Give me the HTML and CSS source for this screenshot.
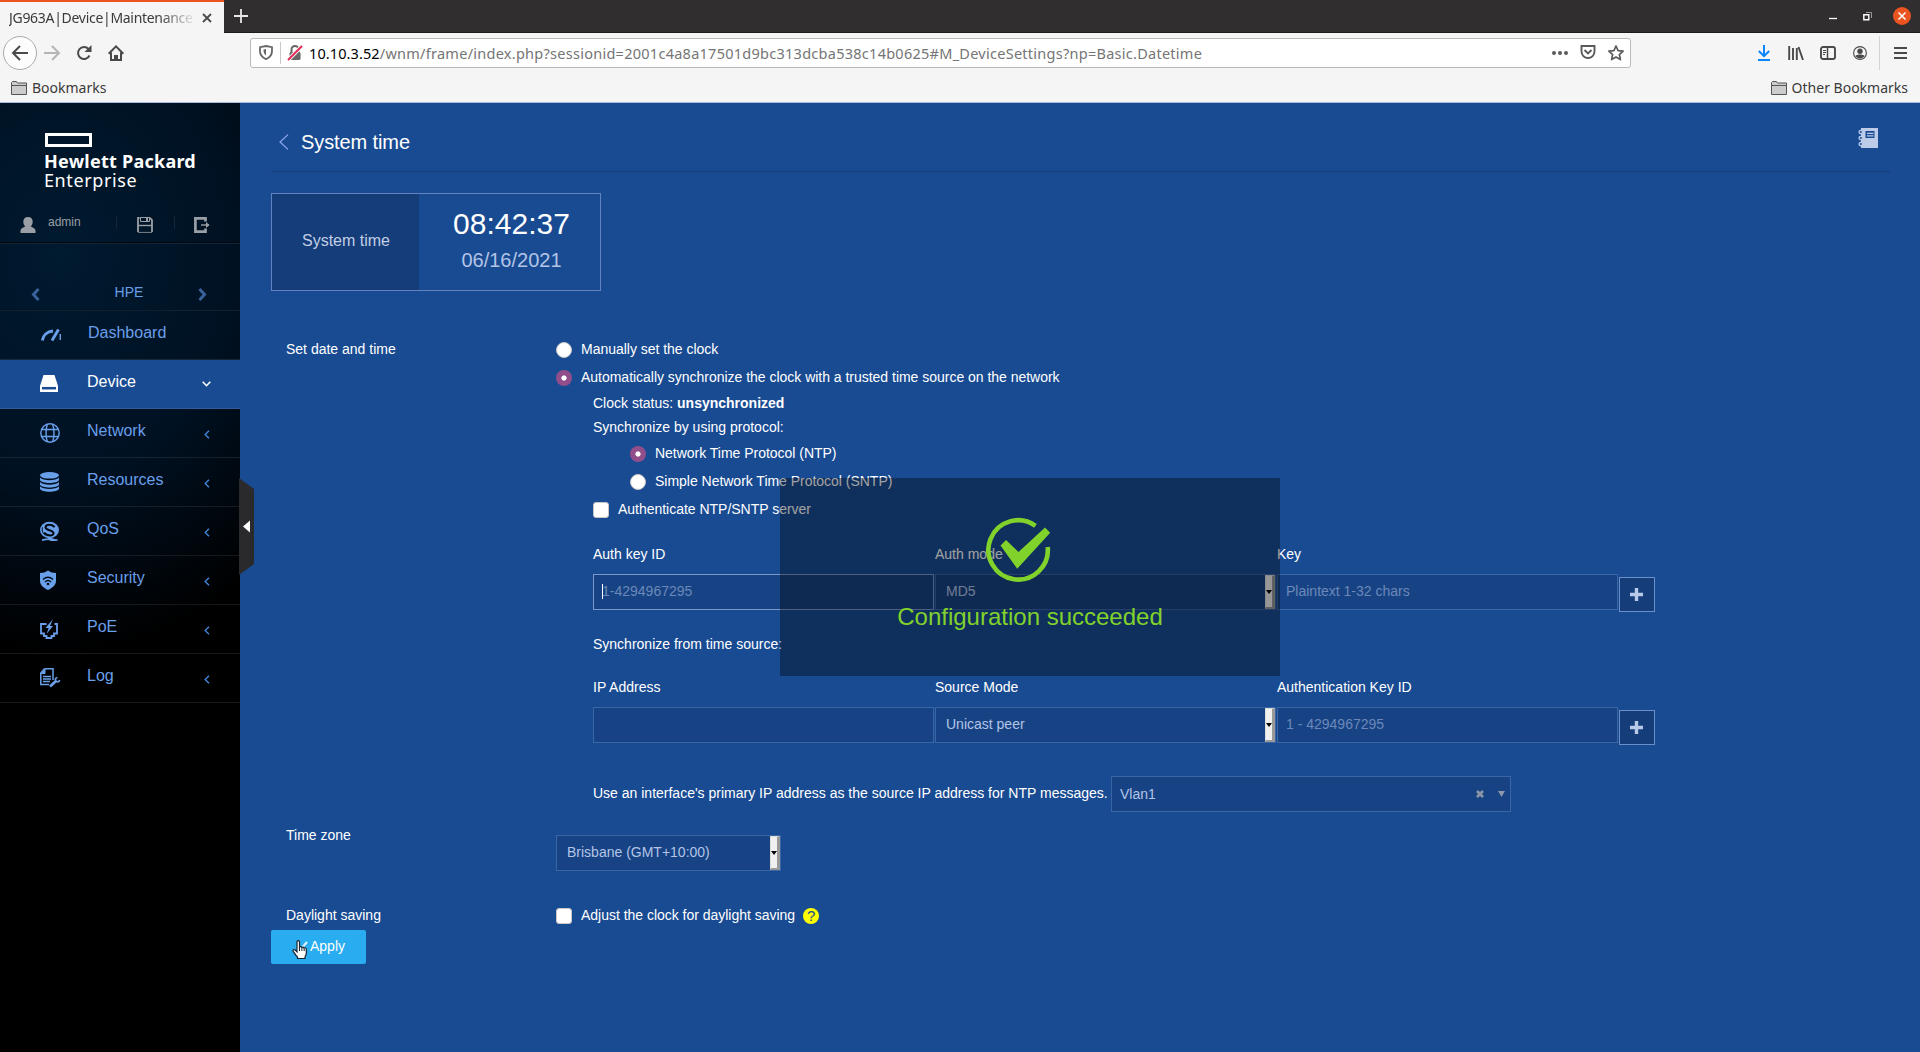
FILE: index.html
```html
<!DOCTYPE html>
<html lang="en">
<head>
<meta charset="utf-8">
<title>JG963A|Device|Maintenance</title>
<link rel="stylesheet" href="styles.css">
</head>
<body>
<div class="browser">
  <div class="tabstrip">
    <div class="tab"><span class="tab-title">JG963A|Device|Maintenance</span>
      <svg class="tab-close" width="10" height="10" viewBox="0 0 10 10"><path d="M1 1l8 8M9 1l-8 8" stroke="#4a4a4a" stroke-width="1.8"/></svg>
    </div>
    <svg class="tab-new" width="14" height="14" viewBox="0 0 14 14"><path d="M7 0v14M0 7h14" stroke="#e8e8e8" stroke-width="1.8"/></svg>
    <div class="window-buttons">
      <svg width="8" height="10" viewBox="0 0 8 10"><path d="M0 7.5h8" stroke="#fff" stroke-width="1.3"/></svg>
      <svg width="9" height="9" viewBox="0 0 9 9" fill="none"><path d="M.8 2.8h5v5h-5z" stroke="#fff" stroke-width="1.4"/><path d="M3 .5h5.5V6" stroke="#999"/></svg>
      <svg class="window-close" width="18" height="18" viewBox="0 0 18 18"><circle cx="9" cy="9" r="9" fill="#e95420"/><path d="M5.500 5.500l7 7M12.500 5.500l-7 7" stroke="#fff" stroke-width="1.5"/></svg>
    </div>
  </div>
  <div class="navbar">
    <div class="nav-buttons">
      <span class="back"><svg width="18" height="16" viewBox="0 0 18 16" fill="none" stroke="#4a4a4a" stroke-width="2"><path d="M17 8H2M9 1L2 8l7 7"/></svg></span>
      <svg width="17" height="16" viewBox="0 0 17 16" fill="none" stroke="#b5b5b5" stroke-width="2"><path d="M0 8h15M8 1l7 7-7 7"/></svg>
      <svg width="16" height="16" viewBox="0 0 16 16" fill="none" stroke="#4a4a4a" stroke-width="2"><path d="M13.500 10.500A6 6 0 1 1 12.500 4"/><path d="M15.500 0v7h-7z" fill="#4a4a4a" stroke="none"/></svg>
      <svg width="16" height="16" viewBox="0 0 16 16" fill="none" stroke="#4a4a4a" stroke-width="2"><path d="M.7 8.700L8 1.400l7.300 7.300M3 7.500V15h10V7.500"/><path d="M6 15v-5h4v5" fill="#4a4a4a" stroke="none"/></svg>
    </div>
    <div class="urlbar">
      <svg width="14" height="15" viewBox="0 0 14 15" fill="none" stroke="#666" stroke-width="1.8"><path d="M7 1L13 2.200V6c0 4.500-3 7-6 8.200C4 13 1 10.500 1 6V2.200z"/><path d="M7 4v6.500C5 9 4.500 7.500 4.500 4.500z" fill="#666" stroke="none"/></svg>
      <i class="url-divider"></i>
      <svg class="lock" width="16" height="16" viewBox="0 0 16 16" fill="none"><path d="M4.500 8V4.500a3.500 3.500 0 0 1 7 0V8" stroke="#666" stroke-width="2"/><rect x="2.500" y="7" width="11" height="8" rx="1.500" fill="#666"/><path d="M1 15L15 1" stroke="#f5f5f5" stroke-width="4"/><path d="M1 15L15 1" stroke="#e22850" stroke-width="1.800"/></svg>
      <span class="url"><b>10.10.3.52</b>/wnm/frame/index.php?sessionid=2001c4a8a17501d9bc313dcba538c14b0625#M_DeviceSettings?np=Basic.Datetime</span>
      <div class="url-actions">
        <svg width="16" height="4" viewBox="0 0 16 4" fill="#5a5a5a"><circle cx="2" cy="2" r="2"/><circle cx="8" cy="2" r="2"/><circle cx="14" cy="2" r="2"/></svg>
        <svg width="16" height="15" viewBox="0 0 16 15" fill="none" stroke="#5a5a5a" stroke-width="1.900"><path d="M1.500 1h13v5.500a6.500 6.500 0 0 1-13 0z"/><path d="M4.500 5L8 8.500 11.500 5"/></svg>
        <svg width="16" height="16" viewBox="0 0 16 16" fill="none" stroke="#5a5a5a" stroke-width="1.700" stroke-linejoin="round"><path d="M8 1l2.100 4.600 5 .6-3.700 3.400 1 5L8 12.100l-4.400 2.500 1-5L.9 6.200l5-.6z"/></svg>
      </div>
    </div>
    <div class="tools">
      <svg width="14" height="16" viewBox="0 0 14 16" fill="none" stroke="#0a84ff" stroke-width="2"><path d="M7 0v11M1.800 6L7 11.200 12.200 6M1 15h12"/></svg>
      <svg width="16" height="14" viewBox="0 0 16 14" stroke="#4a4a4a" stroke-width="1.900"><path d="M1.200 0v14M5 2v12M8.800 2v12M10.500 1l4.500 13"/></svg>
      <svg width="16" height="14" viewBox="0 0 16 14" fill="none" stroke="#4a4a4a"><rect x="1" y="1" width="14" height="12" rx="2" stroke-width="1.900"/><path d="M7.500 1v12" stroke-width="1.500"/><path d="M3 4.500h3M3 6.500h3M3 8.500h2"/></svg>
      <svg width="14" height="14" viewBox="0 0 14 14"><circle cx="7" cy="7" r="6.400" fill="none" stroke="#4a4a4a" stroke-width="1.100"/><circle cx="7" cy="5.200" r="2.700" fill="#4a4a4a"/><path d="M2.500 10c1-2 8-2 9 0-2 3.300-7 3.300-9 0z" fill="#4a4a4a"/></svg>
      <i class="tool-divider"></i>
      <svg width="13" height="12" viewBox="0 0 13 12" stroke="#4a4a4a" stroke-width="2"><path d="M0 1h13M0 6h13M0 11h13"/></svg>
    </div>
  </div>
  <div class="bookmarks">
    <span class="bookmark"><svg width="16" height="14" viewBox="0 0 16 14" fill="#ccc" stroke="#555"><path d="M.5 13.500V1.500l1-1h4l1 1.500h9v11.500z"/><path d="M.5 4.500h15"/></svg>Bookmarks</span>
    <span class="bookmark"><svg width="16" height="14" viewBox="0 0 16 14" fill="#ccc" stroke="#555"><path d="M.5 13.500V1.500l1-1h4l1 1.500h9v11.500z"/><path d="M.5 4.500h15"/></svg>Other Bookmarks</span>
  </div>
</div>

<div class="app">
  <aside class="sidebar">
    <div class="brand"><i class="brand-mark"></i><span class="brand-name">Hewlett Packard</span><span class="brand-sub">Enterprise</span></div>
    <div class="user">
      <svg width="16" height="16" viewBox="0 0 16 16" fill="#9a9fa5"><path d="M8 0c3 0 4.700 2 4.700 4.700 0 2-.8 3.500-2 4.500 2 1.300 4.500 2 4.800 4.300V16H.5v-2.500C.8 11.200 3.300 10.500 5.300 9.200c-1.200-1-2-2.500-2-4.500C3.300 2 5 0 8 0z"/></svg>
      <span class="user-name">admin</span><i></i>
      <svg width="16" height="16" viewBox="0 0 16 16" fill="none" stroke="#9a9fa5"><path d="M1 15V1h1.500M13 1l2 2v12" stroke-width="1.800"/><path d="M1 15.400h14" stroke-width=".8"/><path d="M1 8.500h14" stroke-width="1.400"/><path d="M3.500 0v4.500h9V0M4 .5h8" stroke-width="1"/><path d="M10 1v3" stroke-width="2"/></svg><i></i>
      <svg width="16" height="16" viewBox="0 0 16 16" fill="none" stroke="#9a9fa5"><path d="M11.500 4.500V1.400H1.400v13.200h10.100V11.500" stroke-width="2.700"/><path d="M7 8h8" stroke-width="1.400"/><path d="M12 5l3.500 3L12 11z" fill="#9a9fa5" stroke="none"/></svg>
    </div>
    <div class="context">
      <svg width="9" height="13" viewBox="0 0 9 13" fill="none" stroke="#39629c" stroke-width="3"><path d="M7.500 1L2.500 6.500l5 5.500"/></svg>
      <span>HPE</span>
      <svg width="9" height="13" viewBox="0 0 9 13" fill="none" stroke="#39629c" stroke-width="3"><path d="M1.500 1l5 5.500-5 5.500"/></svg>
    </div>
    <nav class="menu">
      <a class="item"><svg width="21" height="20" viewBox="0 0 21 20" fill="none" stroke="#6a9fea"><path d="M2.300 15.500C3 10.500 7 6.500 13 6" stroke-width="2.800"/><path d="M12 15.500L18.500 4.500" stroke-width="2.900"/><path d="M20.300 9v6" stroke-width="1.400"/></svg><span>Dashboard</span></a>
      <a class="item active"><svg width="20" height="20" viewBox="0 0 20 20"><path fill="#fff" d="M3.500 1h11L18 12v6H0v-6z"/><path stroke="#194b92" stroke-width="2.500" d="M2 14.200h14"/></svg><span>Device</span><svg class="caret" width="9" height="6" viewBox="0 0 9 6"><path d="M.7.7l3.800 4 3.800-4"/></svg></a>
      <a class="item"><svg width="20" height="20" viewBox="0 0 20 20" fill="none" stroke="#6a9fea" stroke-width="1.400"><circle cx="10" cy="10" r="9.200"/><path d="M7.500 1C5.500 6 5.500 14 7.500 19M12.500 1c2 5 2 13 0 18M1.500 6.500h17M1.500 13.500h17"/></svg><span>Network</span><svg class="caret" width="6" height="9" viewBox="0 0 6 9"><path d="M5 .7L1.200 4.500 5 8.300"/></svg></a>
      <a class="item"><svg width="20" height="20" viewBox="0 0 20 20" fill="#6a9fea"><ellipse cx="9.500" cy="3.300" rx="9.500" ry="3.300"/><path d="M0 5.500C3 9 16 9 19 5.500V8c-1 4-18 4-19 0zM0 10c3 3.500 16 3.500 19 0v2.500c-1 4-18 4-19 0zM0 14.300c3 3.500 16 3.500 19 0v2.400c-1 4-18 4-19 0z"/></svg><span>Resources</span><svg class="caret" width="6" height="9" viewBox="0 0 6 9"><path d="M5 .7L1.200 4.500 5 8.300"/></svg></a>
      <a class="item"><svg width="20" height="20" viewBox="0 0 20 20" fill="none"><ellipse cx="9.500" cy="9" rx="9.500" ry="8.200" fill="#6a9fea"/><path d="M14.500 6.300C12.500 2.800 5.500 2.800 5.500 6.300c0 3.500 8 2.500 8 6 0 3-6 3-9.500-.5" stroke="#000a14" stroke-width="2"/><path d="M2.500 6.300c-1 4 .5 6.500 3 8" stroke="#000a14" stroke-width="1"/><path d="M2 19.200c3-.5 5-1.700 7.500-.8 3 1.300 5 1 8 .3M8 16.500l7 2.500" stroke="#6a9fea" stroke-width="1.600"/></svg><span>QoS</span><svg class="caret" width="6" height="9" viewBox="0 0 6 9"><path d="M5 .7L1.200 4.500 5 8.300"/></svg></a>
      <a class="item"><svg width="20" height="20" viewBox="0 0 20 20"><path fill="#6a9fea" d="M8 .5c2 1.700 5 2.500 8 2.500v8c0 4-3.500 7-8 9-4.500-2-8-5-8-9V3c3 0 6-.8 8-2.500z"/><path fill="none" stroke="#04101f" stroke-width="1.300" d="M3 9.500c3-3 7-3 10 0M5 12c2-2 4-2 6 0"/><circle cx="8" cy="14" r="1.300" fill="#04101f"/></svg><span>Security</span><svg class="caret" width="6" height="9" viewBox="0 0 6 9"><path d="M5 .7L1.200 4.500 5 8.300"/></svg></a>
      <a class="item"><svg width="20" height="20" viewBox="0 0 20 20"><path fill="none" stroke="#6a9fea" stroke-width="1.800" d="M6.500 5H1v9.500h3v2.500h2.500v2h5v-2H14v-2.500h3V5h-2.500"/><path fill="#6a9fea" d="M13 0L5.500 9h3.200L6.500 15l6.500-8H10z"/></svg><span>PoE</span><svg class="caret" width="6" height="9" viewBox="0 0 6 9"><path d="M5 .7L1.200 4.500 5 8.300"/></svg></a>
      <a class="item"><svg width="20" height="20" viewBox="0 0 20 20" fill="none" stroke="#6a9fea"><path d="M4.500.8H13V12M4.500.8L.8 5v11.500H9" stroke-width="1.500"/><path d="M5 1v4.500H1" fill="#6a9fea"/><path d="M3 8.500h8M3 11h8M3 13.500h7" stroke-width="1.300"/><path d="M10 18.500l6-5.500" stroke-width="2.800"/><path d="M17.500 9.500c-2 0-2.700 2-1.500 3.500s3.500.8 3.500-1" stroke-width="1.700"/></svg><span>Log</span><svg class="caret" width="6" height="9" viewBox="0 0 6 9"><path d="M5 .7L1.200 4.500 5 8.300"/></svg></a>
    </nav>
    <svg class="handle" width="15" height="97" viewBox="0 0 15 97"><path fill="#2a2a2c" d="M0 0l15 11v75L0 97z"/><path fill="#fff" d="M11 42.500v12L4 48.500z"/></svg>
  </aside>

  <main class="main">
    <header class="page-head">
      <svg width="10" height="16" viewBox="0 0 10 16" fill="none" stroke="#8fa8f0" stroke-width="1.200"><path d="M9 .6L1 8l8 7.400"/></svg>
      <h1>System time</h1>
      <svg class="notebook" width="20" height="20" viewBox="0 0 20 20"><path fill="#bccbe8" d="M3 0h17v20H3z"/><path fill="#194b92" d="M7.500 3h9v7h-9z"/><path stroke="#bccbe8" stroke-width="1.300" d="M9 5.300h6.500M9 7.800h6.500"/><g fill="#194b92" stroke="#bccbe8" stroke-width="1.300"><circle cx="2.800" cy="4" r="1.700"/><circle cx="2.800" cy="10" r="1.700"/><circle cx="2.800" cy="16" r="1.700"/></g></svg>
    </header>
    <section class="clock">
      <div class="clock-label">System time</div>
      <div class="clock-value"><span class="time">08:42:37</span><span class="date">06/16/2021</span></div>
    </section>

    <section class="form-row">
      <div class="label">Set date and time</div>
      <div class="field">
        <label class="option"><i class="radio"></i>Manually set the clock</label>
        <label class="option"><i class="radio on"></i>Automatically synchronize the clock with a trusted time source on the network</label>
        <div class="nested">
          <p>Clock status: <b>unsynchronized</b></p>
          <p>Synchronize by using protocol:</p>
          <div class="protocols">
            <label class="option"><i class="radio on"></i>Network Time Protocol (NTP)</label>
            <label class="option"><i class="radio"></i>Simple Network Time Protocol (SNTP)</label>
          </div>
          <label class="option"><i class="check"></i>Authenticate NTP/SNTP server</label>
          <div class="columns heads"><span>Auth key ID</span><span>Auth mode</span><span>Key</span></div>
          <div class="columns">
            <div class="box hint focus"><i class="text-caret"></i>1-4294967295</div>
            <div class="box select">MD5<i class="drop"></i></div>
            <div class="box hint">Plaintext 1-32 chars</div>
            <div class="add"><svg width="13" height="13" viewBox="0 0 13 13"><path d="M6.500 0v13M0 6.500h13" stroke="#b9c9ea" stroke-width="3.400"/></svg></div>
          </div>
          <p class="sources-title">Synchronize from time source:</p>
          <div class="columns heads"><span>IP Address</span><span>Source Mode</span><span>Authentication Key ID</span></div>
          <div class="columns">
            <div class="box"></div>
            <div class="box select">Unicast peer<i class="drop"></i></div>
            <div class="box hint">1 - 4294967295</div>
            <div class="add"><svg width="13" height="13" viewBox="0 0 13 13"><path d="M6.500 0v13M0 6.500h13" stroke="#b9c9ea" stroke-width="3.400"/></svg></div>
          </div>
          <div class="interface">
            <span class="interface-text">Use an interface's primary IP address as the source IP address for NTP messages.</span>
            <div class="box combo"><span>Vlan1</span>
              <svg width="8" height="8" viewBox="0 0 8 8"><path d="M1 1l6 6M7 1L1 7" stroke="#8d97a8" stroke-width="2.600"/></svg>
              <svg width="7" height="6" viewBox="0 0 7 6"><path fill="#8d97a8" d="M0 0h7L3.500 6z"/></svg>
            </div>
          </div>
        </div>
      </div>
    </section>

    <section class="form-row zone">
      <div class="label">Time zone</div>
      <div class="field"><div class="box select zone-select">Brisbane (GMT+10:00)<i class="drop"></i></div></div>
    </section>
    <section class="form-row dst">
      <div class="label">Daylight saving</div>
      <div class="field"><label class="option"><i class="check"></i>Adjust the clock for daylight saving<span class="help">?</span></label></div>
    </section>
    <button class="apply"><svg width="12" height="10" viewBox="0 0 12 10" fill="none" stroke="#d8f1ff" stroke-width="2.200"><path d="M0 4l3.500 3.500L9 1"/></svg>Apply</button>
  </main>

  <div class="toast">
    <svg width="66" height="66" viewBox="0 0 66 66"><path d="M49.500 8.800A29.700 29.700 0 1 0 61.700 30" fill="none" stroke="#82d22c" stroke-width="4.600"/><path d="M14.500 28.500l5.500-5.500 12.500 12L59 10.500l5.200 5.200-33 36z" fill="#82d22c"/></svg>
    <span>Configuration succeeded</span>
  </div>
  <svg class="pointer" width="16" height="20" viewBox="0 0 16 20"><path d="M5 1.800c0-1.600 2.500-1.600 2.500 0V7c.8-.7 2-.5 2.200.4.800-.6 2-.3 2.200.6.900-.4 2.400-.1 2.400 1.200v4c0 1.700-1 2.500-1.300 4v1.300H5.500V17C3.500 15.500 2.500 13 1.200 11.300.5 10 2 9 3.200 10L5 11.800z" fill="#fff" stroke="#16222e" stroke-width="1.200"/><path d="M7.500 11V7M9.900 11V8M12.200 11V8.500" stroke="#16222e"/></svg>
</div>
</body>
</html>
```
FILE: styles.css
```css
* { box-sizing: border-box; }
body { margin: 0; width: 1920px; height: 1052px; overflow: hidden; font: 14px/20px "Liberation Sans", Arial, sans-serif; color: #fff; }
svg { display: block; flex: none; }
i { font-style: normal; flex: none; }
p, h1 { margin: 0; }

/* browser chrome */
.browser { height: 103px; background: #f5f5f5; border-bottom: 1px solid #a9bce0; font-family: "Noto Sans", sans-serif; color: #3a3a3a; }
.tabstrip { height: 33px; background: #302e2f; display: flex; align-items: center; border-bottom: 1px solid #1c1b1b; }
.tab { width: 224px; height: 33px; margin-bottom: -1px; background: #f5f5f5; border-top: 2px solid #e95420; padding: 0 12px 0 9px; display: flex; align-items: center; justify-content: space-between; }
.tab-title { width: 188px; overflow: hidden; white-space: nowrap; font-size: 14px; letter-spacing: -.3px; -webkit-mask-image: linear-gradient(90deg, #000 80%, transparent); mask-image: linear-gradient(90deg, #000 80%, transparent); }
.tab-new { margin-left: 10px; }
.window-buttons { margin-left: auto; padding-right: 9px; display: flex; align-items: center; gap: 26px; }
.window-close { margin-left: -5px; }
.navbar { height: 39px; display: flex; align-items: center; }
.nav-buttons { width: 250px; padding-left: 3px; display: flex; align-items: center; gap: 15px; }
.nav-buttons svg:last-child { margin-left: 1px; }
.back { width: 34px; height: 34px; margin-right: -8px; border: 1px solid #aaa; border-radius: 50%; background: #fcfcfc; display: flex; align-items: center; justify-content: center; }
.back svg:last-child { margin-left: 0; }
.urlbar { width: 1381px; height: 30px; border: 1px solid #b9b9b9; border-radius: 3px; background: #fff; display: flex; align-items: center; padding: 0 6px 0 8px; }
.url-divider { width: 1px; height: 22px; background: #c8c8c8; margin: 0 6px 0 7px; }
.url { margin-left: 6px; font-size: 14.500px; letter-spacing: .265px; color: #757575; white-space: nowrap; }
.url b { font-weight: 400; color: #000; letter-spacing: .1px; }
.url-actions { margin-left: auto; display: flex; align-items: center; gap: 12px; }
.tools { margin-left: auto; padding-right: 13px; display: flex; align-items: center; gap: 16.600px; }
.tool-divider { width: 1px; height: 34px; background: #d4d4d4; margin-right: -3px; margin-left: -4px; }
.bookmarks { height: 30px; padding: 2px 12px 0 11px; display: flex; justify-content: space-between; align-items: center; }
.bookmark { display: flex; align-items: center; gap: 5px; font-size: 14px; }

/* application */
.app { position: relative; height: 949px; display: flex; background: #194b92; }
.sidebar { position: relative; width: 240px; color: #6a9fea; background: radial-gradient(ellipse 320px 400px at 60px 150px, #001a30 0%, #001122 55%, #000 100%); }
.brand { height: 106px; padding: 30px 0 0 44px; color: #fff; display: flex; flex-direction: column; font-family: "Noto Sans", sans-serif; }
.brand-mark { width: 47px; height: 14px; border: 3px solid #fff; margin: 0 0 5px 1px; }
.brand-name { font-weight: 700; font-size: 18px; line-height: 19px; letter-spacing: .25px; }
.brand-sub { font-size: 18px; line-height: 19px; letter-spacing: .6px; }
.user { height: 34px; padding: 7px 0 0 20px; display: flex; align-items: flex-start; border-bottom: 1px solid #00060c; box-shadow: 0 1px #14273a; }
.user svg { margin-top: 1px; }
.user-name { width: 68px; margin-left: 12px; font-size: 12px; line-height: 12px; color: #9a9fa5; }
.user i { width: 1px; height: 13px; background: #14273a; margin: 0 20px 0 0; }
.user i + svg + i { margin: 0 19px 0 21px; }
.context { height: 67px; padding: 28px 33px 0 31px; display: flex; align-items: flex-start; justify-content: space-between; font-size: 14px; }
.context svg { margin-top: 17px; }
.context span { margin: 11px 0 0 20px; line-height: 20px; }
.menu { display: flex; flex-direction: column; border-top: 1px solid #10202f; }
.item { height: 49px; padding: 0 30px 0 40px; display: flex; align-items: center; border-bottom: 1px solid rgba(255,255,255,.09); font-size: 16px; }
.item span { margin: -5px 0 0; width: 113px; }
.item svg:first-child { margin: -1px 27px 0 0; flex: 0 0 20px; overflow: visible; }
.item.active { background: #194b92; color: #fff; }
.caret { margin-left: auto; margin-top: 3px; fill: none; stroke: #3f86d8; stroke-width: 1.400px; }
.active .caret { stroke: #fff; stroke-width: 1.600px; margin-top: 0; margin-right: -1px; }
.handle { position: absolute; left: 239px; top: 375px; }

.main { flex: 1; padding: 0 30px 0 31px; }
.page-head { height: 69px; border-bottom: 1px solid #153d79; padding-left: 8px; display: flex; align-items: center; }
.page-head svg { margin-top: 9px; }
.page-head h1 { margin: 9px 0 0 12px; font-size: 20px; font-weight: 400; letter-spacing: -.1px; }
.page-head .notebook { margin: 2px 12px 0 auto; }
.clock { width: 330px; height: 98px; margin: 21px 0 44px; border: 1px solid #6283bd; display: flex; }
.clock-label { width: 147px; padding: 37px 0 0 1px; background: #153d79; color: #c3cfe6; font-size: 16px; text-align: center; }
.clock-value { flex: 1; padding: 13px 0 0 4px; display: flex; flex-direction: column; align-items: center; }
.time { font-size: 30px; line-height: 34px; }
.date { margin-top: 9px; font-size: 20px; line-height: 20px; color: #b3c4e6; }

.form-row { display: flex; padding-left: 15px; }
.label { width: 270px; line-height: 28px; }
.option { height: 28px; display: flex; align-items: center; white-space: nowrap; letter-spacing: -.02px; }
.radio, .check { width: 16px; height: 16px; margin: 2px 9px 0 0; background: #fff; border: 1px solid #c9c6c4; }
.radio { border-radius: 50%; }
.check { border-radius: 3px; }
.radio.on { border: 0; background: radial-gradient(circle, #fff 2.200px, #924d8b 3px); }
.nested { padding-left: 37px; }
.nested p { line-height: 24px; }
.protocols { padding-left: 37px; }
.columns { display: grid; grid-template-columns: 341px 341px 341px 36px; gap: 1px; }
.columns.heads { margin: 21px 0 10px; }
.nested .sources-title { margin: 20px 0 -1px; line-height: 25px; }
.box { height: 36px; padding: 0 10px 2px; border: 1px solid #3b66a5; background: #174384; color: #b3c4e6; display: flex; align-items: center; white-space: nowrap; }
.box.hint { color: #6b88b9; padding-left: 8px; }
.box.focus { border-color: #7b98c9; }
.text-caret { width: 1px; height: 15px; margin-right: -1px; background: #fff; }
.box.select { padding-right: 0; padding-bottom: 0; align-items: flex-start; line-height: 32px; }
.drop { width: 10px; height: 34px; margin-left: auto; background: #f0f0f0; border: 1px solid #dcdcdc; border-right: 3px solid #999; border-bottom: 2px solid #999; display: flex; align-items: center; justify-content: center; }
.drop::after { content: ""; border: 3px solid transparent; border-top: 4px solid #000; border-bottom: 0; }
.add { height: 35px; margin-top: 3px; padding-right: 1px; border: 1px solid #6c8fca; background: #153d79; display: flex; align-items: center; justify-content: center; }
.interface { margin-top: 31px; display: flex; align-items: center; }
.interface-text { width: 518px; margin-top: -2px; white-space: nowrap; }
.combo { width: 400px; padding: 0 6px 0 8px; }
.combo span { margin-right: auto; }
.combo svg + svg { margin-left: 15px; }
.combo svg { margin-right: -1px; }
.zone { margin-top: 9px; }
.zone-select { width: 225px; margin-top: 14px; }
.dst { margin-top: 30px; }
.help { width: 16px; height: 16px; margin: 2px 0 0 8px; border-radius: 50%; background: #ff0; color: #194b92; line-height: 16px; text-align: center; font-size: 15px; }
.apply { width: 95px; height: 34px; margin: 1px 0 0; padding: 0 0 2px 27px; border: 0; border-radius: 2px; background: #29adf0; color: #fff; font: inherit; display: flex; align-items: center; }

/* overlays */
.toast { position: absolute; left: 780px; top: 375px; width: 500px; height: 198px; background: rgba(0,0,0,.37); color: #82d22c; font-size: 24px; line-height: 28px; text-align: center; }
.toast svg { margin: 39px 0 20px 206px; }
.pointer { position: absolute; left: 292px; top: 837px; }
```
